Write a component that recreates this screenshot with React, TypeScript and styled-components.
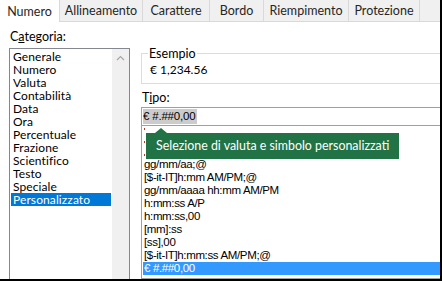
import styled, { createGlobalStyle } from 'styled-components'

const GlobalStyle = createGlobalStyle`
  body {
    margin: 0;
    overflow: hidden;
    background: #ffffff;
  }
`

const colors = {
  text: '#1a1a1a',
  tabLine: '#d9d9d9',
  tabBack: '#f0f0f0',
  groupLine: '#dcdcdc',
  fieldLine: '#a0a0a0',
  listLine: '#828790',
  select: '#0078d7',
  selectLight: '#3399ff',
  tip: '#217346',
}

const Frame = styled.div`
  box-sizing: border-box;
  width: 442px;
  height: 281px;
  border-right: 2px solid #000;
  border-bottom: 2px solid #000;
  background: #fff;
  overflow: hidden;
  font-family: Lato, 'Open Sans', sans-serif;
  font-size: 12.5px;
  color: ${colors.text};
  display: flex;
  flex-direction: column;
`

const TabBar = styled.div`
  display: flex;
  height: 22px;
  flex-shrink: 0;
  background: ${colors.tabBack};
  border-bottom: 1px solid ${colors.tabLine};
  box-sizing: border-box;
`

const Tab = styled.div<{ active?: boolean; w: number }>`
  box-sizing: border-box;
  width: ${({ w }) => w}px;
  display: flex;
  align-items: center;
  justify-content: center;
  padding-top: 1px;
  height: ${({ active }) => (active ? '22px' : '21px')};
  background: ${({ active }) => (active ? '#fff' : colors.tabBack)};
  border-right: 1px solid ${colors.tabLine};
  color: #262626;
  line-height: 14px;
`

const Body = styled.div`
  flex: 1;
  display: grid;
  grid-template-columns: 121px 1fr;
  column-gap: 11px;
  padding-left: 9px;
  margin-right: -30px;
  min-height: 0;
`

const Column = styled.div`
  display: flex;
  flex-direction: column;
  min-height: 0;
`

const Label = styled.div`
  height: 15px;
  line-height: 15px;
  padding-left: 1px;
  color: #000;
`

const CategoryLabel = styled(Label)`
  margin-top: 7px;
`

const Key = styled.span`
  text-decoration: underline;
  text-underline-offset: 1px;
`

const CategoryBox = styled.div`
  flex: 1;
  margin-top: 4px;
  margin-bottom: -6px;
  border: 1px solid ${colors.listLine};
  display: flex;
  min-height: 0;
`

const CategoryItems = styled.div`
  flex: 1;
  padding: 1px 1px 0 1px;
  display: flex;
  flex-direction: column;
`

const CategoryItem = styled.div<{ selected?: boolean }>`
  height: 13px;
  line-height: 13px;
  font-size: 12px;
  letter-spacing: 0.1px;
  padding-left: 2px;
  color: ${({ selected }) => (selected ? '#fff' : '#000')};
  background: ${({ selected }) => (selected ? colors.select : 'transparent')};
`

const ScrollTrack = styled.div`
  width: 17px;
  background: #f0f0f0;
  display: flex;
  justify-content: center;
  padding-top: 6px;
  box-sizing: border-box;
`

const Sample = styled.fieldset`
  margin: 25px 0 0 0;
  padding: 2px 0 6px 8px;
  border: 1px solid ${colors.groupLine};
  min-width: 0;
`

const Legend = styled.legend`
  padding: 0 1px;
  margin-left: -2px;
  line-height: 13px;
  color: #000;
`

const SampleValue = styled.div`
  line-height: 15px;
  font-size: 12px;
  color: #000;
`

const TypeLabel = styled(Label)`
  margin-top: 6px;
`

const TypeInput = styled.div`
  box-sizing: border-box;
  margin-top: 2px;
  height: 19px;
  border: 1px solid ${colors.fieldLine};
  display: flex;
  align-items: center;
  padding-left: 1px;
`

const InputSelection = styled.span`
  background: #cccccc;
  font-family: 'Liberation Sans', Arial, sans-serif;
  font-size: 11.5px;
  letter-spacing: -0.2px;
  line-height: 15px;
  padding-right: 2px;
  color: #000;
`

const FormatBox = styled.div`
  position: relative;
  box-sizing: border-box;
  height: 153px;
  border: 1px solid ${colors.fieldLine};
  border-top: none;
  overflow: hidden;
  display: flex;
  flex-direction: column;
  justify-content: flex-end;
  padding: 0 0 3px 1px;
`

const FormatItem = styled.div<{ selected?: boolean }>`
  flex-shrink: 0;
  height: 13px;
  line-height: 13px;
  padding-left: 1px;
  font-family: 'Liberation Sans', Arial, sans-serif;
  font-size: 11.5px;
  letter-spacing: -0.35px;
  white-space: nowrap;
  color: ${({ selected }) => (selected ? '#fff' : '#000')};
  background: ${({ selected }) => (selected ? colors.selectLight : 'transparent')};
`

const HiddenMark = styled.span`
  display: inline-block;
  width: 1px;
  height: 2px;
  margin-top: 9px;
  background: #b03a2e;
`

const Tooltip = styled.div`
  position: absolute;
  top: 7px;
  left: 4px;
  width: 253px;
  height: 26px;
  background: ${colors.tip};
  color: #fff;
  font-size: 12.4px;
  line-height: 26px;
  padding-left: 10px;
  box-sizing: border-box;
  white-space: nowrap;

  &::before {
    content: '';
    position: absolute;
    top: -5px;
    left: 9px;
    border-left: 6px solid transparent;
    border-right: 6px solid transparent;
    border-bottom: 5px solid ${colors.tip};
  }
`

const tabs = [
  { label: 'Numero', w: 60 },
  { label: 'Allineamento', w: 83 },
  { label: 'Carattere', w: 67 },
  { label: 'Bordo', w: 54 },
  { label: 'Riempimento', w: 85 },
  { label: 'Protezione', w: 71 },
]

const categories = [
  'Generale',
  'Numero',
  'Valuta',
  'Contabilità',
  'Data',
  'Ora',
  'Percentuale',
  'Frazione',
  'Scientifico',
  'Testo',
  'Speciale',
  'Personalizzato',
]

const formats = [
  'gg/mm/aa;@',
  '[$-it-IT]h:mm AM/PM;@',
  'gg/mm/aaaa hh:mm AM/PM',
  'h:mm:ss A/P',
  'h:mm:ss,00',
  '[mm]:ss',
  '[ss],00',
  '[$-it-IT]h:mm:ss AM/PM;@',
  '€ #.##0,00',
]

function Chevron() {
  return (
    <svg width="9" height="6" viewBox="0 0 9 6">
      <path d="M1 5 L4.5 1.5 L8 5" fill="none" stroke="#a6a6a6" strokeWidth="1.2" />
    </svg>
  )
}

export default function App() {
  return (
    <>
      <GlobalStyle />
      <Frame>
        <TabBar>
          {tabs.map((t, i) => (
            <Tab key={t.label} active={i === 0} w={t.w}>
              {t.label}
            </Tab>
          ))}
        </TabBar>
        <Body>
          <Column>
            <CategoryLabel>
              C<Key>a</Key>tegoria:
            </CategoryLabel>
            <CategoryBox>
              <CategoryItems>
                {categories.map((c) => (
                  <CategoryItem key={c} selected={c === 'Personalizzato'}>
                    {c}
                  </CategoryItem>
                ))}
              </CategoryItems>
              <ScrollTrack>
                <Chevron />
              </ScrollTrack>
            </CategoryBox>
          </Column>
          <Column>
            <Sample>
              <Legend>Esempio</Legend>
              <SampleValue>€ 1,234.56</SampleValue>
            </Sample>
            <TypeLabel>
              T<Key>i</Key>po:
            </TypeLabel>
            <TypeInput>
              <InputSelection>€ #.##0,00</InputSelection>
            </TypeInput>
            <FormatBox>
              {[0, 1, 2].map((n) => (
                <FormatItem key={`h${n}`}>
                  <HiddenMark />
                </FormatItem>
              ))}
              {formats.map((f, i) => (
                <FormatItem key={f} selected={i === formats.length - 1}>
                  {f}
                </FormatItem>
              ))}
              <Tooltip>Selezione di valuta e simbolo personalizzati</Tooltip>
            </FormatBox>
          </Column>
        </Body>
      </Frame>
    </>
  )
}
